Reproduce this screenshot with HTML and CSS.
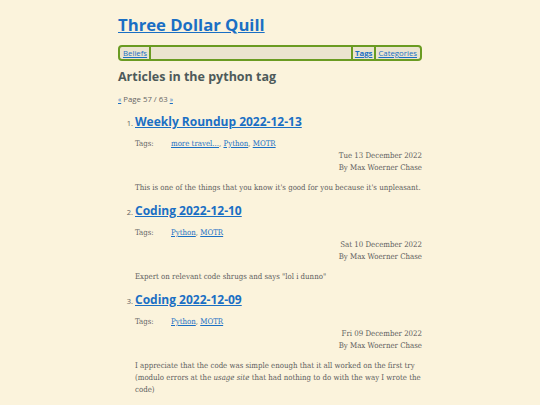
FILE: index.html
```html
<!DOCTYPE html>
<html>

<head>
    <title>Articles in the python tag - Three Dollar Quill</title>
    <link rel="stylesheet" href="styles.css">
</head>

<body>
    <div class="page">
        <header>
            <h1 class="site-title"><a href="#">Three Dollar Quill</a></h1>
            <nav class="menu">
                <a href="#" class="first">Beliefs</a>
                <span class="spacer"></span>
                <a href="#" class="current">Tags</a>
                <a href="#">Categories</a>
            </nav>
        </header>

        <h2 class="page-heading">Articles in the python tag</h2>
        <p class="paginator"><a href="#">&laquo;</a> Page 57 / 63 <a href="#">&raquo;</a></p>

        <ol class="articles" start="1">
            <li>
                <h3><a href="#">Weekly Roundup 2022-12-13</a></h3>
                <div class="tags">
                    <span class="label">Tags:</span>
                    <span><a href="#">more travel...</a>, <a href="#">Python</a>, <a href="#">MOTR</a></span>
                </div>
                <div class="meta">
                    <div>Tue 13 December 2022</div>
                    <div>By Max Woerner Chase</div>
                </div>
                <p class="summary">This is one of the things that you know it's good for you because it's unpleasant.</p>
            </li>
            <li>
                <h3><a href="#">Coding 2022-12-10</a></h3>
                <div class="tags">
                    <span class="label">Tags:</span>
                    <span><a href="#">Python</a>, <a href="#">MOTR</a></span>
                </div>
                <div class="meta">
                    <div>Sat 10 December 2022</div>
                    <div>By Max Woerner Chase</div>
                </div>
                <p class="summary">Expert on relevant code shrugs and says "lol i dunno"</p>
            </li>
            <li>
                <h3><a href="#">Coding 2022-12-09</a></h3>
                <div class="tags">
                    <span class="label">Tags:</span>
                    <span><a href="#">Python</a>, <a href="#">MOTR</a></span>
                </div>
                <div class="meta">
                    <div>Fri 09 December 2022</div>
                    <div>By Max Woerner Chase</div>
                </div>
                <p class="summary">I appreciate that the code was simple enough that it all worked on the first try (modulo errors at the <em>usage site</em> that had nothing to do with the way I wrote the code)</p>
            </li>
        </ol>
    </div>
</body>

</html>
```

FILE: styles.css
```css
body {
    margin: 0;
    background-color: #fbf3dc;
    color: #5e5e5e;
    font-family: "DejaVu Serif", serif;
    font-stretch: condensed;
    font-size: 7.8px;
    line-height: 12px;
}

a {
    color: #1a6fc4;
}

.page {
    width: 304px;
    margin: 0 auto;
    padding-top: 14px;
}

.site-title,
.menu,
.page-heading,
.paginator,
.articles h3,
.articles li::marker {
    font-family: "Open Sans", sans-serif;
    font-stretch: 92%;
}

.site-title {
    margin: 0;
    font-size: 16.7px;
    line-height: 22px;
}

.site-title a {
    color: #1a6fc4;
}

.menu {
    display: flex;
    align-items: center;
    margin-top: 9px;
    border: 2px solid #6a9b22;
    border-radius: 4px;
    background-color: #ebe4cf;
    font-size: 7.8px;
    line-height: 12px;
    padding: 0 1px;
}

.menu a {
    padding: 0 2px;
    border-left: 2px solid #6a9b22;
}

.menu a.first {
    border-left: none;
    border-right: 2px solid #6a9b22;
}

.menu .spacer {
    flex: 1;
}

.menu a.current {
    font-weight: bold;
}

.page-heading {
    margin: 8px 0 0;
    font-size: 12.5px;
    line-height: 16px;
    color: #4d5a5a;
}

.paginator {
    margin: 8px 0 0;
    font-size: 7.8px;
    color: #666;
}

.paginator a {
    font-size: 6.5px;
}

.articles {
    margin: 8px 0 0;
    padding-left: 17px;
}

.articles li::marker {
    font-size: 7.5px;
}

.articles h3 {
    margin: 0;
    font-size: 12px;
    line-height: 16px;
}

.tags {
    display: flex;
    margin-top: 8px;
    color: #666;
}

.tags .label {
    width: 36px;
}

.meta {
    text-align: right;
}

.summary {
    margin: 8px 0 9px;
}
```
